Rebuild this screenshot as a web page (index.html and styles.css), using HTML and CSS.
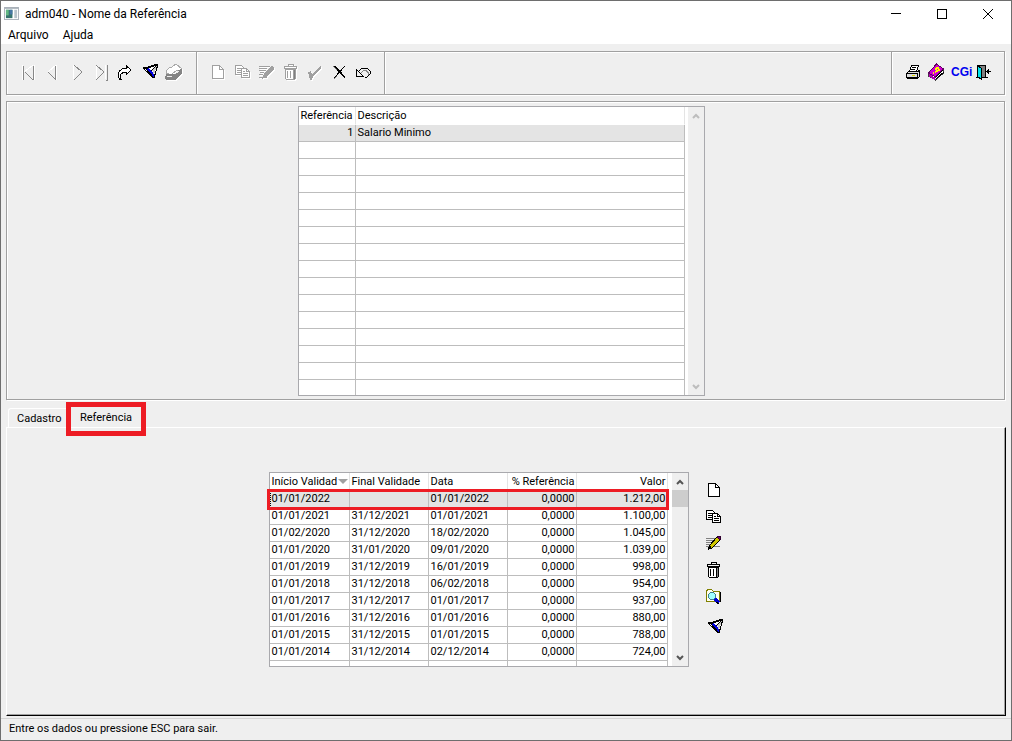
FILE: index.html
```html
<!DOCTYPE html>
<html lang="pt-BR">
<head>
<meta charset="utf-8">
<title>adm040 - Nome da Referência</title>
<link rel="stylesheet" href="styles.css">
</head>
<body>
<svg class="defs" aria-hidden="true">
  <symbol id="i-page" viewBox="0 0 24 24"><path class="paper" d="M6.500 5.500h7l4 4v9h-11z"/><path d="M13.500 5.500v4h4" fill="none"/></symbol>
  <symbol id="i-copy" viewBox="0 0 24 24"><path class="paper" d="M4.500 5.500h6l3 3v6h-9z"/><path d="M6 8.500h4M6 10.500h5M6 12.500h4" fill="none"/><path class="paper" d="M10.500 8.500h5l3 3v6h-8z"/><path d="M15.500 8.500v3h3M12 11.500h2M12 13.500h5M12 15.500h5" fill="none"/></symbol>
  <symbol id="i-trash" viewBox="0 0 24 24"><path class="paper" d="M6.500 8.500h10v9l-1 1h-8l-1-1z"/><path d="M9 4.500V3.500h5v1M5.500 7.500v-2h12v2zM8.500 10v7M11.500 10v7M14.500 9v9" fill="none"/><path d="M15.500 9v9" stroke="#808080" fill="none"/></symbol>
  <symbol id="i-filter" viewBox="0 0 24 24"><path d="M6 10L21 6 17 21z" fill="#fff" stroke="none"/><path d="M9 10h3l5 6v5z" fill="#0000e6" stroke="none"/><path d="M15 12l5-4-3 9z" fill="#c8c8c8" stroke="none"/><path d="M6 10.500l5-1 9-3" fill="none" stroke="#000" stroke-width="2"/><path d="M6 10l10 10M8 10l9 10M21 6l-4 14M19 8l-5 5" fill="none" stroke="#000"/></symbol>
</svg>
<div class="window">
  <header class="titlebar">
    <svg class="app-icon" viewBox="0 0 16 14" aria-hidden="true"><path fill="#a8b0b8" d="M0 0h16v14H0z"/><path fill="#fff" d="M1 2h14v11H1z"/><path fill="#35736c" d="M2 3h7v9H2z"/><path fill="#62b883" d="M2 3h3v6H2z"/><path fill="#4777a4" d="M6 3h3v5H6z"/><path fill="#b9c4cc" d="M11 3h3v9h-3z"/></svg>
    <h1 class="title">adm040 - Nome da Referência</h1>
    <div class="window-controls">
      <button aria-label="Minimizar"><svg viewBox="0 0 12 12"><path d="M1 5.500h10"/></svg></button>
      <button aria-label="Maximizar"><svg viewBox="0 0 12 12"><path d="M1.500 1.500h9v9h-9z"/></svg></button>
      <button aria-label="Fechar"><svg class="smooth" viewBox="0 0 12 12"><path d="M1 1l10 10M11 1L1 11"/></svg></button>
    </div>
  </header>
  <nav class="menubar"><button>Arquivo</button><button>Ajuda</button></nav>

  <div class="toolbar" role="toolbar">
    <div class="group">
      <button aria-label="Primeiro" class="nav"><svg viewBox="0 0 24 24"><path class="hi" d="M6.500 5v15M8 12l9-7M18.500 5v15"/><path d="M7.500 6v14M17.500 6v14M9 12l8 8"/></svg></button>
      <button aria-label="Anterior" class="nav"><svg viewBox="0 0 24 24"><path class="hi" d="M8 12l8-7M16.500 5v15"/><path d="M15.500 6v14M8 12l8 8"/></svg></button>
      <button aria-label="Próximo" class="nav"><svg viewBox="0 0 24 24"><path class="hi" d="M9.500 5v14"/><path d="M10 5l8 7-8 8"/></svg></button>
      <button aria-label="Último" class="nav"><svg viewBox="0 0 24 24"><path class="hi" d="M8.500 6v13M17.500 5v14"/><path d="M8 5l8 7-8 8M19.500 5v15h-2"/></svg></button>
      <button aria-label="Ir para"><svg viewBox="0 0 24 24"><path fill="#fff" stroke="#000" d="M9 19.500H8l-2-3v-3l2-3 3-2h3v-3l5 4.500-5 5v-3h-2l-3 2-1 2z"/></svg></button>
      <button aria-label="Filtrar"><svg><use href="#i-filter" x="1" y="-2" width="24" height="24"/></svg></button>
      <button aria-label="Limpar" class="off"><svg viewBox="0 0 24 24"><path fill="#fff" stroke="#aaa" d="M6 13v-2l3-3 3-1 4-3 6 5-2 2-3-1-5 4H9z"/><path fill="#858585" d="M6 14h8l4-4 4-1v4l-7 7H6l-1-2z"/><path stroke="#eee" d="M7 16.500h5M15 14l4-3"/></svg></button>
    </div>
    <div class="group edit">
      <button aria-label="Novo" class="off"><svg><use href="#i-page" x="1" width="24" height="24"/></svg></button>
      <button aria-label="Copiar" class="off"><svg><use href="#i-copy" x="2" width="24" height="24"/></svg></button>
      <button aria-label="Editar" class="off"><svg viewBox="0 0 24 24"><path d="M6 6.500h11M6 8.500h8M6 10.500h7M7 12.500h4M6 14.500h4M6 17.500h8" stroke="currentColor"/><path fill="currentColor" d="M11 14l7-8 3 1v2l-8 8-4 2z"/></svg></button>
      <button aria-label="Excluir" class="off"><svg><use href="#i-trash" x="2" y="1" width="24" height="24"/></svg></button>
      <button aria-label="Confirmar" class="off"><svg viewBox="0 0 24 24"><path fill="currentColor" d="M7 12l3-1 1 3 9-8v2l-8 8-1 4H9z"/></svg></button>
      <button aria-label="Cancelar"><svg viewBox="0 0 24 24"><path stroke="#777" d="M8 6l4 4M9 19l3-3"/><path stroke="#000" d="M9 6l11 12M10 6l10 11M20 6L9 18"/></svg></button>
      <button aria-label="Desfazer"><svg viewBox="0 0 24 24"><path stroke="#888" d="M12 12.500l3-2h2l2 2v2"/><path stroke="#000" d="M7.500 9v7h7M8 10l6 6M10 11l3-3h5l3 3v3l-3 3h-2"/></svg></button>
    </div>
    <div class="group fill"></div>
    <div class="group right">
      <button aria-label="Imprimir"><svg viewBox="0 0 24 24"><path fill="#fff" stroke="#000" d="M9.500 11.500l2-6h7l-2 6z"/><path stroke="#000" d="M12 7.500h4M11 9.500h4"/><path fill="#ddd" stroke="#000" d="M8.500 11.500h9l2-1v6l-2 2h-10l-1-1v-4z"/><path stroke="#000" d="M7 13.500h11M7 17.500h11M17.500 13v5"/><path stroke="#dddd00" d="M12 15.500h3"/></svg></button>
      <button aria-label="Ajuda"><svg viewBox="0 0 24 24"><path fill="#fff" stroke="#404040" d="M4.500 14l8-9 7 5v3l-8 7-7-4z"/><path fill="#d000d0" stroke="#600060" d="M4.500 13l8-9 7 5-8 8z"/><path stroke="#b000b0" stroke-width="2" d="M5 15l6 4"/><path stroke="#000" d="M12 19l8-7M12 17l7-7"/><path stroke="#ffff00" stroke-width="2" d="M11 9l3-1 1 2-4 2M9 13h1"/></svg></button>
      <button aria-label="CGI" class="cgi"><span>CGi</span></button>
      <button aria-label="Sair"><svg viewBox="0 0 24 24"><path fill="#808080" stroke="#000" d="M6.500 5.500h7v12h-7z"/><path fill="#00e5ee" stroke="#000" d="M5.500 5.500l4 3v11l-4-3z"/><path stroke="#000" d="M4 17.500h3M13 17.500h3M14 11.500h5"/><path fill="#000" d="M14 11.500l3-3v6z"/></svg></button>
    </div>
  </div>

  <main class="content">
    <section class="panel" aria-label="Referências">
      <div class="datagrid top">
        <table>
          <colgroup><col class="c-ref"><col></colgroup>
          <thead><tr><th>Referência</th><th>Descrição</th></tr></thead>
          <tbody>
            <tr class="selected"><td class="num">1</td><td>Salario Minimo</td></tr>
            <tr><td></td><td></td></tr><tr><td></td><td></td></tr><tr><td></td><td></td></tr>
            <tr><td></td><td></td></tr><tr><td></td><td></td></tr><tr><td></td><td></td></tr>
            <tr><td></td><td></td></tr><tr><td></td><td></td></tr><tr><td></td><td></td></tr>
            <tr><td></td><td></td></tr><tr><td></td><td></td></tr><tr><td></td><td></td></tr>
            <tr><td></td><td></td></tr><tr><td></td><td></td></tr>
            <tr class="cut"><td></td><td></td></tr>
          </tbody>
        </table>
        <div class="scroll disabled">
          <button aria-label="Rolar para cima"><svg viewBox="0 0 8 6"><path d="M1 5l3-3 3 3"/></svg></button>
          <button aria-label="Rolar para baixo"><svg viewBox="0 0 8 6"><path d="M1 1l3 3 3-3"/></svg></button>
        </div>
      </div>
    </section>

    <div class="tabs" role="tablist">
      <button class="tab" role="tab" aria-selected="false">Cadastro</button>
      <button class="tab active" role="tab" aria-selected="true">Referência</button>
    </div>
    <section class="tabpage" role="tabpanel">
      <div class="datagrid values">
        <table>
          <colgroup><col class="c-start"><col class="c-date"><col class="c-date"><col class="c-pct"><col></colgroup>
          <thead><tr><th><span class="sorted">Início Validad<i class="sort"></i></span></th><th>Final Validade</th><th>Data</th><th class="num">% Referência</th><th class="num">Valor</th></tr></thead>
          <tbody>
            <tr class="selected focused"><td>01/01/2022</td><td></td><td>01/01/2022</td><td class="num">0,0000</td><td class="num">1.212,00</td></tr>
            <tr><td>01/01/2021</td><td>31/12/2021</td><td>01/01/2021</td><td class="num">0,0000</td><td class="num">1.100,00</td></tr>
            <tr><td>01/02/2020</td><td>31/12/2020</td><td>18/02/2020</td><td class="num">0,0000</td><td class="num">1.045,00</td></tr>
            <tr><td>01/01/2020</td><td>31/01/2020</td><td>09/01/2020</td><td class="num">0,0000</td><td class="num">1.039,00</td></tr>
            <tr><td>01/01/2019</td><td>31/12/2019</td><td>16/01/2019</td><td class="num">0,0000</td><td class="num">998,00</td></tr>
            <tr><td>01/01/2018</td><td>31/12/2018</td><td>06/02/2018</td><td class="num">0,0000</td><td class="num">954,00</td></tr>
            <tr><td>01/01/2017</td><td>31/12/2017</td><td>01/01/2017</td><td class="num">0,0000</td><td class="num">937,00</td></tr>
            <tr><td>01/01/2016</td><td>31/12/2016</td><td>01/01/2016</td><td class="num">0,0000</td><td class="num">880,00</td></tr>
            <tr><td>01/01/2015</td><td>31/12/2015</td><td>01/01/2015</td><td class="num">0,0000</td><td class="num">788,00</td></tr>
            <tr><td>01/01/2014</td><td>31/12/2014</td><td>02/12/2014</td><td class="num">0,0000</td><td class="num">724,00</td></tr>
            <tr class="cut"><td></td><td></td><td></td><td></td><td></td></tr>
          </tbody>
        </table>
        <div class="scroll">
          <button aria-label="Rolar para cima"><svg viewBox="0 0 8 6"><path d="M1 5l3-3 3 3"/></svg></button>
          <div class="thumb"></div>
          <button aria-label="Rolar para baixo"><svg viewBox="0 0 8 6"><path d="M1 1l3 3 3-3"/></svg></button>
        </div>
      </div>
      <div class="actions">
        <button aria-label="Novo"><svg><use href="#i-page" width="24" height="24"/></svg></button>
        <button aria-label="Copiar"><svg><use href="#i-copy" width="24" height="24"/></svg></button>
        <button aria-label="Editar"><svg viewBox="0 0 24 24"><path d="M4 6.500h11M4 8.500h8M4 10.500h7M4 12.500h5M4 14.500h14" stroke="#808080"/><path fill="#d0c800" stroke="#000" d="M8 13l7-8 3 3-8 8-3 1z"/><path fill="#700070" stroke="#300030" d="M15 5l2-1 2 1-1 3z"/><path stroke="#000" stroke-width="2" d="M6 17l3-2"/></svg></button>
        <button aria-label="Excluir"><svg><use href="#i-trash" width="24" height="24"/></svg></button>
        <button aria-label="Consultar"><svg viewBox="0 0 24 24"><path fill="#fffff0" stroke="#808000" d="M4.500 15.500v-10l1-2h4l2 2h6v10z"/><circle cx="10" cy="10" r="3.500" fill="#a0ffff" stroke="#40808f"/><path stroke="#0000d0" stroke-width="3" d="M13 13l4 4"/><path stroke="#000" d="M14 16l3 2M18.500 6v10"/></svg></button>
        <button aria-label="Filtrar"><svg><use href="#i-filter" width="24" height="24"/></svg></button>
      </div>
    </section>
  </main>
  <footer class="status">Entre os dados ou pressione ESC para sair.</footer>
</div>
</body>
</html>
```
FILE: styles.css
```css
*, *::after { box-sizing: border-box; }

body {
  margin: 0;
  background: #efefef;
  color: #000;
  font: 11px/16px Roboto, "Liberation Sans", sans-serif;
}

button {
  padding: 0;
  border: 0;
  background: none;
  color: inherit;
  font: inherit;
}

svg { display: block; fill: none; }
.defs { position: absolute; width: 0; height: 0; }

.window {
  display: flex;
  flex-direction: column;
  min-height: 100vh;
  border: 1px solid #6e6e6e;
}

/* Title and menu */
.titlebar {
  display: flex;
  align-items: center;
  height: 25px;
  padding-left: 3px;
  background: #fff;
}
.app-icon { width: 15px; height: 13px; }
.title {
  flex: 1;
  margin: 0 0 0 6px;
  font: 12px/16px Roboto, "Noto Sans", sans-serif;
}
.window-controls { display: flex; }
.window-controls button {
  display: grid;
  place-items: center;
  width: 46px;
  height: 24px;
}
.window-controls svg {
  width: 12px;
  height: 12px;
  stroke: #000;
  shape-rendering: crispEdges;
}
.window-controls .smooth { shape-rendering: auto; }
.menubar {
  display: flex;
  gap: 14px;
  height: 18px;
  padding-left: 7px;
  background: #fff;
  font: 12px/18px Roboto, "Noto Sans", sans-serif;
}

/* Toolbar */
.toolbar {
  display: flex;
  height: 44px;
  margin: 7px 6px 6px 5px;
  border: 1px solid #a0a0a0;
  box-shadow: 1px 1px #fff;
}
.group {
  display: flex;
  align-items: center;
  padding: 0 8px 2px;
  border-right: 1px solid #a0a0a0;
  box-shadow: inset 1px 1px #fff;
}
.group:first-child { padding: 0 12px 2px 9px; }
.group.edit { padding-right: 11px; }
.group.fill { flex: 1; }
.group.right { border-right: 0; }
.group button, .actions button { width: 24px; height: 24px; }
.group svg, .actions svg {
  width: 24px;
  height: 24px;
  overflow: visible;
  color: #000;
  shape-rendering: crispEdges;
}
symbol { stroke: currentColor; }
.paper { fill: #fff; }
.nav svg { stroke: #888; }
.nav .hi { stroke: #fff; }
.group .off svg {
  color: #a0a0a0;
  filter: drop-shadow(1px 1px 0 #fff);
}
.off .paper { fill: #efefef; }
.cgi span {
  display: block;
  padding-left: 3px;
  color: #0000f0;
  font: bold 12px/24px "Liberation Sans Narrow", "Liberation Sans", sans-serif;
}

/* Upper panel */
.content {
  display: flex;
  flex: 1;
  flex-direction: column;
  padding: 0 5px;
}
.panel {
  display: flex;
  justify-content: center;
  margin-right: 1px;
  padding: 4px 9px 3px 0;
  border: 1px solid #a0a0a0;
  box-shadow: inset 1px 1px #fff, 1px 1px #fff;
}

/* Data grids */
.datagrid {
  position: relative;
  display: flex;
  justify-content: space-between;
  border: 1px solid #a9a9ad;
  background: #fff;
}
.datagrid.top { width: 407px; }
.datagrid.values { width: 420px; }
table {
  table-layout: fixed;
  border-collapse: separate;
  border-spacing: 0;
}
.top table { width: 386px; }
.values table { width: 398px; }
.c-ref { width: 57px; }
.c-start { width: 80px; }
.c-date { width: 79px; }
.c-pct { width: 69px; }
th, td {
  height: 17px;
  padding: 0 1px 0 2px;
  border-right: 1px solid #bdbdbd;
  border-bottom: 1px solid #bdbdbd;
  line-height: 16px;
  text-align: left;
  white-space: nowrap;
}
th {
  height: 18px;
  border-right-color: #e4e4e4;
  border-bottom-color: #fff;
  font-weight: normal;
}
.num { text-align: right; }
.selected td { background: #e4e4e4; }
.focused td { border-bottom: 1px dotted #000; }
.focused td:first-child { border-left: 1px dotted #000; padding-left: 1px; }
.cut td { height: 15px; border-bottom: 0; }
.values .cut td { height: 5px; }
.sorted { display: flex; align-items: center; justify-content: space-between; }
.sort {
  border: 5px solid transparent;
  border-top-color: #a0a0a0;
  border-bottom: 0;
}

/* Highlight frames drawn over the row and the tab */
.values::after, .tab.active::after {
  content: "";
  position: absolute;
  border: 3px solid #ed1c24;
  pointer-events: none;
}
.values::after { top: 16px; right: 19px; left: -3px; height: 21px; }
.tab.active::after { inset: -6px 0 -9px; border-width: 5px; }

.scroll {
  display: flex;
  flex-direction: column;
  width: 16px;
  background: #efefef;
}
.scroll button {
  display: grid;
  place-items: center;
  height: 17px;
}
.scroll button:last-child { margin-top: auto; }
.scroll svg { width: 8px; height: 6px; stroke: #555; stroke-width: 2; }
.scroll.disabled svg { stroke: #bdbdbd; }
.thumb { height: 17px; background: #cdcdcd; }

/* Tabs */
.tabs {
  display: flex;
  height: 19px;
  margin-top: 8px;
  padding-left: 2px;
}
.tab {
  width: 58px;
  height: 19px;
  padding: 2px 0 0 8px;
  border: solid #fff;
  border-width: 1px 0 0 1px;
  border-radius: 3px 0 0 0;
  text-align: left;
}
.tab.active {
  position: relative;
  width: 80px;
  padding: 0;
  border: 0;
  text-align: center;
}
.tabpage {
  display: flex;
  flex: 1;
  align-items: flex-start;
  justify-content: center;
  gap: 13px;
  padding: 44px 18px 48px 0;
  border: 1px solid #fff;
  border-right-color: #000;
  border-bottom-color: #000;
  box-shadow: inset -1px -1px #a0a0a0;
}
.actions {
  display: flex;
  flex-direction: column;
  gap: 3px;
  padding-top: 6px;
}

.status {
  height: 22px;
  margin-top: 2px;
  padding-left: 8px;
  border-top: 1px solid #d4d4d4;
  line-height: 20px;
}
```
